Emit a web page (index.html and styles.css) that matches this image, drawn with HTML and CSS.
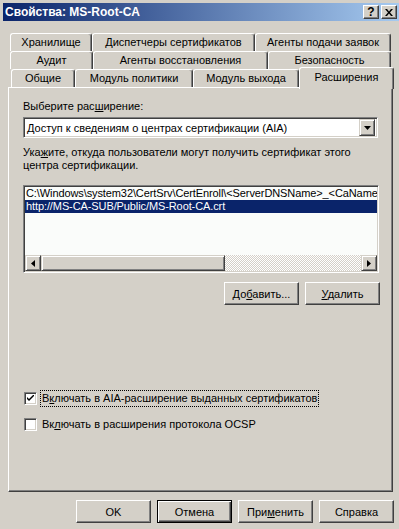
FILE: index.html
```html
<!DOCTYPE html>
<html lang="ru">
<head>
    <meta charset="UTF-8">
    <title>Свойства: MS-Root-CA</title>
    <link rel="stylesheet" href="styles.css">
</head>
<body>

<div class="window">
    <div class="titlebar">
        <span class="title">Свойства: MS-Root-CA</span>
        <div class="caption-btns">
            <span class="cbtn help">?</span>
            <span class="cbtn close">
                <svg width="8" height="7" viewBox="0 0 8 7"><path d="M0 0h2l2 2.5 2-2.5h2l-3 3.5 3 3.5h-2l-2-2.5-2 2.5h-2l3-3.5z" fill="#000"/></svg>
            </span>
        </div>
    </div>

    <div class="content">
        <!-- tab rows, back to front -->
        <div class="tabs">
            <div class="tab-row">
                <div class="tab w82">Хранилище</div>
                <div class="tab w163">Диспетчеры сертификатов</div>
                <div class="tab w136">Агенты подачи заявок</div>
            </div>
            <div class="tab-row">
                <div class="tab w83">Аудит</div>
                <div class="tab w175">Агенты восстановления</div>
                <div class="tab w123">Безопасность</div>
            </div>
            <div class="tab-row front">
                <div class="tab w64">Общие</div>
                <div class="tab w118">Модуль политики</div>
                <div class="tab w106">Модуль выхода</div>
                <div class="tab w95 selected">Расширения</div>
            </div>
        </div>

        <div class="panel">
            <div class="label">Выберите рас<u>ш</u>ирение:</div>
            <div class="combo">
                <span class="combo-text">Доступ к сведениям о центрах сертификации (AIA)</span>
                <span class="combo-btn">
                    <svg width="7" height="4" viewBox="0 0 7 4"><path d="M0 0h7l-3.5 4z" fill="#000"/></svg>
                </span>
            </div>
            <div class="hint">Ука<u>ж</u>ите, откуда пользователи могут получить сертификат этого центра сертификации.</div>

            <div class="listbox">
                <div class="items">
                    <div class="item">C:\Windows\system32\CertSrv\CertEnroll\&lt;ServerDNSName&gt;_&lt;CaName&gt;&lt;CertificateName&gt;.crt</div>
                    <div class="item active">http://MS-CA-SUB/Public/MS-Root-CA.crt</div>
                </div>
                <div class="hscroll">
                    <span class="sbtn">
                        <svg width="4" height="7" viewBox="0 0 4 7"><path d="M4 0v7l-4-3.5z" fill="#000"/></svg>
                    </span>
                    <span class="thumb"></span>
                    <span class="track"></span>
                    <span class="sbtn">
                        <svg width="4" height="7" viewBox="0 0 4 7"><path d="M0 0v7l4-3.5z" fill="#000"/></svg>
                    </span>
                </div>
            </div>

            <div class="list-buttons">
                <button class="btn">До<u>б</u>авить...</button>
                <button class="btn"><u>У</u>далить</button>
            </div>

            <div class="checks">
                <label class="check">
                    <span class="box">
                        <svg width="7" height="7" viewBox="0 0 7 7"><path d="M0 2l2 2 5-5v2l-5 5-2-2z" fill="#000"/></svg>
                    </span>
                    <span class="check-text focus">В<u>к</u>лючать в AIA-расширение выданных сертификатов</span>
                </label>
                <label class="check">
                    <span class="box"></span>
                    <span class="check-text">Вк<u>л</u>ючать в расширения протокола OCSP</span>
                </label>
            </div>
        </div>

        <div class="dlg-buttons">
            <button class="btn">OK</button>
            <button class="btn default">Отмена</button>
            <button class="btn">При<u>м</u>енить</button>
            <button class="btn">Справка</button>
        </div>
    </div>
</div>

</body>
</html>
```

FILE: styles.css
```css
body {
    margin: 0;
    padding: 0;
    background-color: #d4d0c8;
    font-family: "Liberation Sans", Arial, sans-serif;
    font-size: 11px;
    color: #000;
    overflow: hidden;
}

u {
    text-decoration: underline;
    text-underline-offset: 1px;
}

.window {
    width: 399px;
    height: 529px;
    padding: 3px 0 0 3px;
    box-sizing: border-box;
}

.titlebar {
    height: 18px;
    display: flex;
    align-items: center;
    justify-content: space-between;
    padding: 0 2px;
    background-image: linear-gradient(to right, #0a246a, #a6caf0);
}

.title {
    color: white;
    font-weight: bold;
    font-size: 12px;
}

.caption-btns {
    display: flex;
    gap: 2px;
}

.cbtn {
    width: 16px;
    height: 14px;
    box-sizing: border-box;
    display: flex;
    align-items: center;
    justify-content: center;
    background-color: #d4d0c8;
    border: 1px solid;
    border-color: #fff #404040 #404040 #fff;
    box-shadow: inset -1px -1px #808080;
    font-weight: bold;
    font-size: 12px;
    line-height: 12px;
}

.content {
    padding: 12px 0 0 5px;
}

/* tabs */
.tab-row {
    display: flex;
    height: 18px;
    margin-left: 2px;
}

.tab-row.front {
    margin-left: 3px;
}

.tab {
    height: 18px;
    box-sizing: border-box;
    display: flex;
    align-items: center;
    justify-content: center;
    padding-bottom: 1px;
    background-color: #d4d0c8;
    border-top: 1px solid #fff;
    border-left: 1px solid #fff;
    border-right: 1px solid #404040;
    box-shadow: inset -1px 0 #808080;
    border-radius: 3px 3px 0 0;
    white-space: nowrap;
}

.tab.selected {
    position: relative;
    top: -2px;
    height: 22px;
    z-index: 1;
    padding-bottom: 4px;
}

.w64 { width: 64px; }
.w82 { width: 82px; }
.w83 { width: 83px; }
.w95 { width: 95px; }
.w106 { width: 106px; }
.w118 { width: 118px; }
.w123 { width: 123px; }
.w136 { width: 136px; }
.w163 { width: 163px; }
.w175 { width: 175px; }

/* page */
.panel {
    width: 385px;
    height: 405px;
    box-sizing: border-box;
    padding: 12px 0 0 14px;
    border: 1px solid;
    border-color: #fff #404040 #404040 #fff;
    box-shadow: inset -1px -1px #808080;
}

.label {
    line-height: 13px;
}

.combo {
    margin-top: 4px;
    width: 355px;
    height: 21px;
    box-sizing: border-box;
    display: flex;
    align-items: center;
    justify-content: space-between;
    background-color: #fff;
    border: 1px solid;
    border-color: #808080 #fff #fff #808080;
    box-shadow: inset 1px 1px #404040, inset -1px -1px #d4d0c8;
    padding: 0 2px 0 3px;
}

.combo-btn {
    width: 16px;
    height: 17px;
    box-sizing: border-box;
    display: flex;
    align-items: center;
    justify-content: center;
    background-color: #d4d0c8;
    border: 1px solid;
    border-color: #d4d0c8 #404040 #404040 #d4d0c8;
    box-shadow: inset 1px 1px #fff, inset -1px -1px #808080;
}

.hint {
    margin-top: 8px;
    width: 356px;
    line-height: 13px;
}

.listbox {
    margin-top: 13px;
    width: 356px;
    height: 88px;
    box-sizing: border-box;
    display: flex;
    flex-direction: column;
    justify-content: space-between;
    background-color: #fafcfa;
    border: 1px solid;
    border-color: #808080 #fff #fff #808080;
    box-shadow: inset 1px 1px #404040, inset -1px -1px #d4d0c8;
    padding: 1px;
}

.items {
    overflow: hidden;
}

.item {
    height: 13px;
    line-height: 13px;
    padding-left: 1px;
    white-space: nowrap;
    letter-spacing: -0.1px;
}

.item.active {
    background-color: #0a246a;
    color: white;
}

.hscroll {
    display: flex;
    height: 16px;
}

.sbtn,
.thumb {
    height: 16px;
    box-sizing: border-box;
    background-color: #d4d0c8;
    border: 1px solid;
    border-color: #d4d0c8 #404040 #404040 #d4d0c8;
    box-shadow: inset 1px 1px #fff, inset -1px -1px #808080;
}

.sbtn {
    width: 16px;
    display: flex;
    align-items: center;
    justify-content: center;
}

.thumb {
    width: 184px;
}

.track {
    flex: 1;
    background-color: #fff;
    background-image: repeating-conic-gradient(#d4d0c8 0 25%, #fff 0 50%);
    background-size: 2px 2px;
}

.list-buttons {
    margin-top: 9px;
    width: 357px;
    display: flex;
    justify-content: flex-end;
    gap: 6px;
}

.btn {
    width: 75px;
    height: 23px;
    box-sizing: border-box;
    padding: 0;
    font-family: inherit;
    font-size: 11px;
    color: #000;
    background-color: #d4d0c8;
    border: 1px solid;
    border-color: #fff #404040 #404040 #fff;
    box-shadow: inset -1px -1px #808080;
}

.btn.default {
    border-color: #000;
    box-shadow: inset 1px 1px #fff, inset -1px -1px #404040, inset -2px -2px #808080;
}

.checks {
    margin-top: 86px;
    display: flex;
    flex-direction: column;
    gap: 12px;
}

.check {
    display: flex;
    align-items: center;
    height: 14px;
}

.box {
    width: 13px;
    height: 13px;
    margin-left: 1px;
    box-sizing: border-box;
    display: flex;
    align-items: center;
    justify-content: center;
    background-color: #fff;
    border: 1px solid;
    border-color: #808080 #fff #fff #808080;
    box-shadow: inset 1px 1px #404040, inset -1px -1px #d4d0c8;
}

.check-text {
    margin-left: 3px;
    padding: 1px 1px;
    line-height: 13px;
    border: 1px dotted transparent;
}

.check-text.focus {
    border-color: #000;
}

.dlg-buttons {
    margin-top: 8px;
    width: 386px;
    display: flex;
    justify-content: flex-end;
    gap: 6px;
}
```
